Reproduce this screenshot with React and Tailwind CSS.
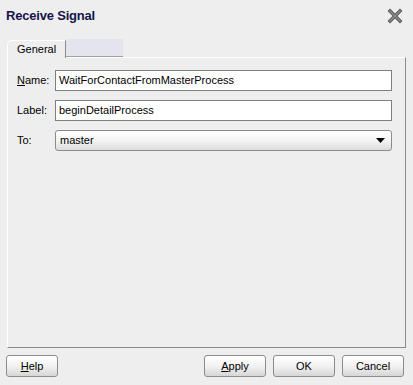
export default function App() {
  return (
    <div className="w-[413px] h-[385px] bg-[#eeeeee] relative overflow-hidden text-[11px] text-black" style={{ fontFamily: '"Liberation Sans", Arial, sans-serif' }}>
      <div className="flex items-center justify-between h-[30px] pl-[6px] pr-[10px] pt-[2px]">
        <span className="font-bold text-[13px] text-[#15154a] tracking-[-0.2px]">Receive Signal</span>
        <svg width="16" height="16" viewBox="0 0 16 16">
          <path d="M3 3 L13 13 M13 3 L3 13" stroke="#555" strokeWidth="3.4" strokeLinecap="square" />
          <path d="M3 3 L13 13 M13 3 L3 13" stroke="#8a8a8a" strokeWidth="1.6" strokeLinecap="square" />
        </svg>
      </div>
      <div className="ml-[7px] mt-[9px] w-[399px]">
        <div className="flex items-end h-[18px]">
          <div className="relative h-[18px] w-[59px] border-l border-t border-r border-l-white border-t-white border-r-[#8a8a8a] rounded-tl-[5px] bg-[#eeeeee] flex items-center pl-[9px] z-10 -mb-px">
            General
          </div>
          <div className="h-[18px] w-[57px] bg-[#e4e4ee] border-b border-[#a0a0a0]"></div>
        </div>
        <div className="h-[291px] border-l border-t border-white border-r border-b border-r-[#8a8a8a] border-b-[#8a8a8a] flex flex-col gap-[9px] pt-[12px] pl-[9px] pr-[13px]">
          <div className="flex items-center h-[21px]">
            <span className="w-[38px]"><u>N</u>ame:</span>
            <div className="flex-1 h-[21px] border border-[#7f7f7f] bg-white flex items-center pl-[3px]">WaitForContactFromMasterProcess</div>
          </div>
          <div className="flex items-center h-[21px]">
            <span className="w-[38px]">Label:</span>
            <div className="flex-1 h-[21px] border border-[#7f7f7f] bg-white flex items-center pl-[3px]">beginDetailProcess</div>
          </div>
          <div className="flex items-center h-[21px]">
            <span className="w-[38px]">To:</span>
            <div className="flex-1 h-[21px] border border-[#8c8c8c] rounded-[3px] bg-gradient-to-b from-white via-[#f4f4f4] to-[#dcdcdc] flex items-center justify-between pl-[4px] pr-[6px]">
              <span>master</span>
              <svg width="9" height="5" viewBox="0 0 9 5"><path d="M0 0 H9 L4.5 5 Z" fill="#000" /></svg>
            </div>
          </div>
        </div>
      </div>
      <div className="flex items-center mt-[7px] px-[6px]">
        <Btn w="w-[52px]"><u>H</u>elp</Btn>
        <div className="flex-1"></div>
        <div className="flex gap-[7px] pr-[3px]">
          <Btn w="w-[62px]"><u>A</u>pply</Btn>
          <Btn w="w-[62px]">OK</Btn>
          <Btn w="w-[62px]">Cancel</Btn>
        </div>
      </div>
    </div>
  )
}

function Btn({ w, children }) {
  return (
    <div className={`${w} h-[22px] border border-[#8c8c8c] rounded-[3px] bg-gradient-to-b from-white via-[#f2f2f2] to-[#d6d6d6] flex items-center justify-center`}>
      {children}
    </div>
  )
}
